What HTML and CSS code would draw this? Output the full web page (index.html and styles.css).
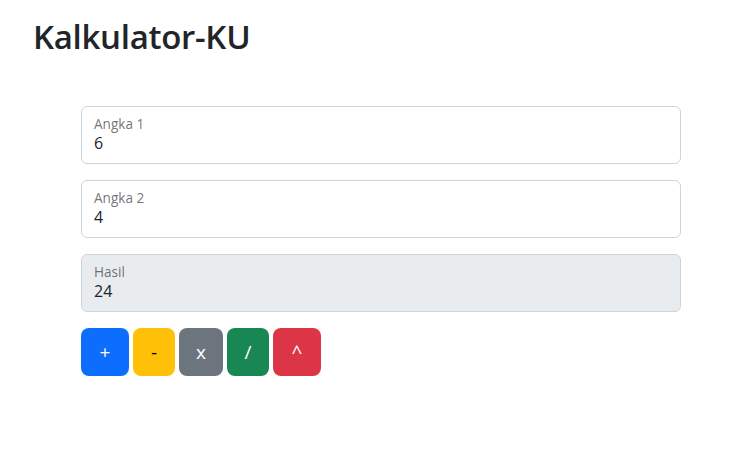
FILE: index.html
```html
<!DOCTYPE html>
<html lang="id">
<head>
<meta charset="utf-8">
<title>Kalkulator-KU</title>
<link rel="stylesheet" href="styles.css">
</head>
<body>
<header class="header">
  <h1 class="title">Kalkulator-KU</h1>
</header>
<main class="calc">
  <div class="field">
    <input class="field-input" type="number" id="angka1" value="6">
    <label class="field-label" for="angka1">Angka 1</label>
  </div>
  <div class="field">
    <input class="field-input" type="number" id="angka2" value="4">
    <label class="field-label" for="angka2">Angka 2</label>
  </div>
  <div class="field">
    <input class="field-input field-readonly" type="text" id="hasil" value="24" readonly>
    <label class="field-label" for="hasil">Hasil</label>
  </div>
  <div class="buttons">
    <button class="btn btn-blue">+</button>
    <button class="btn btn-yellow">-</button>
    <button class="btn btn-gray">x</button>
    <button class="btn btn-green">/</button>
    <button class="btn btn-red">^</button>
  </div>
</main>
</body>
</html>
```
FILE: styles.css
```css
* { box-sizing: border-box; }
html, body { margin: 0; padding: 0; }
body {
  font-family: "Open Sans", "Noto Sans", "Liberation Sans", sans-serif;
  color: #212529;
  background: #fff;
  font-size: 16px;
  line-height: 1.5;
}
.header {
  padding: 17px 33px 0;
}
.title {
  margin: 0;
  font-size: 33px;
  font-weight: 600;
  line-height: 1.2;
  letter-spacing: -0.3px;
}
.calc {
  width: 600px;
  margin: 49px 0 0 81px;
  display: flex;
  flex-direction: column;
  gap: 16px;
}
.field {
  position: relative;
}
.field-input {
  display: block;
  width: 100%;
  height: 58px;
  padding: 26px 12px 10px;
  font: inherit;
  font-size: 16px;
  line-height: 24px;
  color: #212529;
  background: #fff;
  border: 1px solid #ced4da;
  border-radius: 6px;
  appearance: none;
  -moz-appearance: textfield;
  outline: none;
}
.field-input::-webkit-outer-spin-button,
.field-input::-webkit-inner-spin-button { -webkit-appearance: none; margin: 0; }
.field-readonly {
  background: #e9ecef;
}
.field-label {
  position: absolute;
  top: 9px;
  left: 13px;
  font-size: 13.6px;
  line-height: 18px;
  color: rgba(33, 37, 41, 0.65);
  pointer-events: none;
}
.buttons {
  display: flex;
  gap: 4px;
}
.btn {
  height: 48px;
  padding: 0 16px;
  font: inherit;
  font-size: 19px;
  line-height: 30px;
  color: #fff;
  border: 1px solid transparent;
  border-radius: 8px;
  cursor: pointer;
}
.btn-blue { background: #0d6efd; min-width: 48px; }
.btn-yellow { background: #ffc107; color: #000; min-width: 42px; }
.btn-gray { background: #6c757d; min-width: 44px; }
.btn-green { background: #198754; min-width: 42px; }
.btn-red { background: #dc3545; min-width: 48px; }
```
